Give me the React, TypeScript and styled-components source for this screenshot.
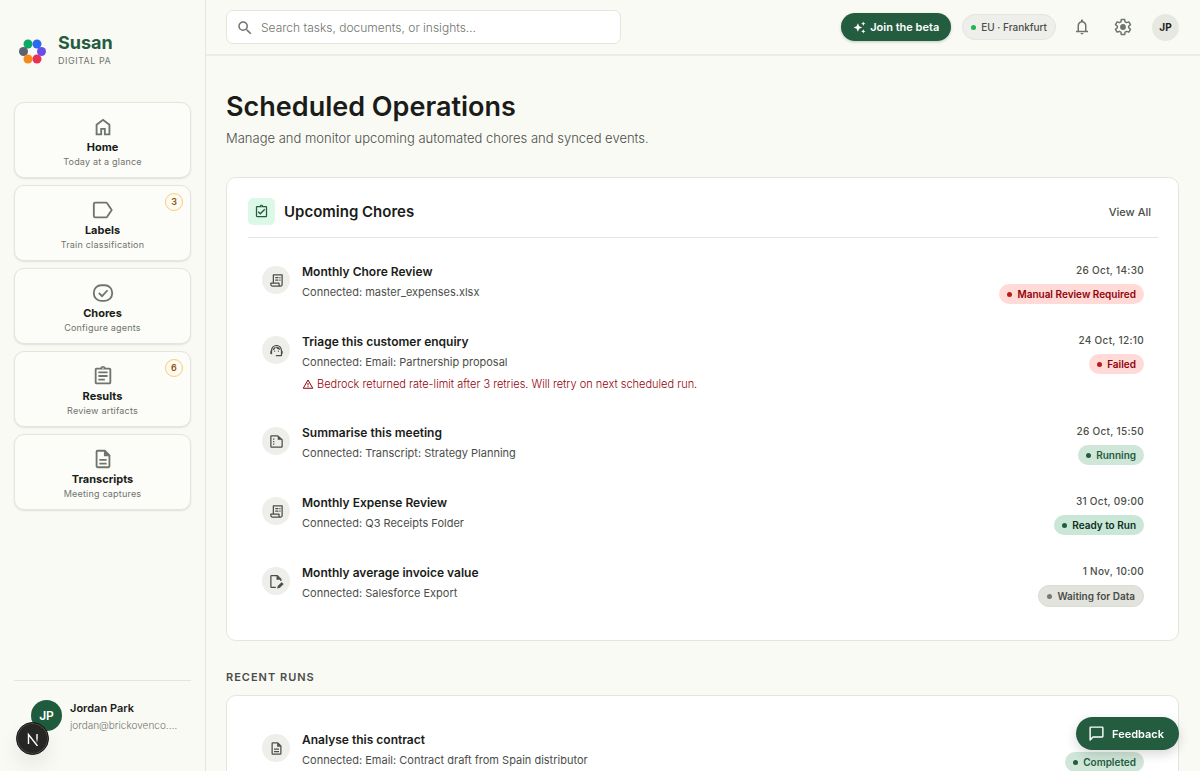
import React from "react";
import styled, { createGlobalStyle, css } from "styled-components";
import {
  MdOutlineAssignment,
  MdOutlineAssignmentTurnedIn,
  MdOutlineSupportAgent,
  MdSearch,
} from "react-icons/md";

const color = {
  page: "#fafaf5",
  card: "#ffffff",
  line: "#e4e5df",
  ink: "#1a1c19",
  body: "#4a4e49",
  muted: "#6f746e",
  green: "#245c3f",
  red: "#93000a",
};

const GlobalStyle = createGlobalStyle`
  *, *::before, *::after { box-sizing: border-box; }
  body {
    margin: 0;
    background: ${color.page};
    color: ${color.ink};
    font-family: Inter, "Liberation Sans", sans-serif;
    font-size: 12px;
    line-height: 20px;
    -webkit-font-smoothing: antialiased;
  }
  h1, h2, h3, p, ul { margin: 0; padding: 0; }
  ul { list-style: none; }
  a { color: inherit; text-decoration: none; }
  button, input { font: inherit; color: inherit; }
  button { border: 0; padding: 0; background: none; cursor: pointer; }
  svg { display: block; flex: none; }
`;

const Shell = styled.div`
  display: flex;
  height: 100vh;
  overflow: hidden;
`;

/* Sidebar */

const Sidebar = styled.aside`
  display: flex;
  flex-direction: column;
  flex: none;
  width: 206px;
  padding: 33px 14px 20px;
  border-right: 1px solid ${color.line};
`;

const Brand = styled.div`
  display: flex;
  align-items: center;
  gap: 12px;
  padding-left: 5px;
  margin-bottom: 33px;
`;

const BrandName = styled.div`
  font-size: 18px;
  font-weight: 700;
  line-height: 20px;
  color: ${color.green};
`;

const BrandTag = styled.div`
  font-size: 9px;
  line-height: 16px;
  letter-spacing: 0.5px;
  color: ${color.muted};
`;

const Nav = styled.nav`
  display: flex;
  flex-direction: column;
  gap: 7px;
`;

const NavCard = styled.a`
  position: relative;
  display: flex;
  flex-direction: column;
  align-items: center;
  height: 76px;
  padding-top: 13px;
  border: 1px solid ${color.line};
  border-radius: 10px;
  background: #fcfcf8;
  box-shadow: 0 1px 2px rgba(0, 0, 0, 0.1);

  svg { color: ${color.muted}; }
`;

const NavTitle = styled.span`
  font-size: 11px;
  font-weight: 700;
  line-height: 16px;
  margin-top: 1px;
`;

const NavHint = styled.span`
  font-size: 9px;
  line-height: 14px;
  letter-spacing: 0.2px;
  color: ${color.muted};
`;

const NavBadge = styled.span`
  position: absolute;
  top: 7px;
  right: 7px;
  width: 18px;
  height: 18px;
  border: 1px solid #f8cd7c;
  border-radius: 50%;
  background: #fffaf0;
  color: #8a5510;
  font-size: 9px;
  font-weight: 600;
  line-height: 16px;
  text-align: center;
`;

const Account = styled.div`
  display: flex;
  align-items: flex-start;
  gap: 8px;
  height: 71px;
  margin-top: auto;
  padding: 19px 10px 0 17px;
  border-top: 1px solid ${color.line};
`;

const AccountAvatar = styled.span`
  flex: none;
  width: 31px;
  height: 31px;
  border-radius: 50%;
  background: #1f5c3d;
  color: #fff;
  font-weight: 600;
  line-height: 31px;
  text-align: center;
`;

const AccountText = styled.div`
  min-width: 0;
`;

const AccountName = styled.div`
  font-size: 11px;
  font-weight: 600;
  line-height: 17px;
`;

const AccountMail = styled.div`
  overflow: hidden;
  color: ${color.muted};
  font-size: 10px;
  font-weight: 300;
  line-height: 17px;
  text-overflow: ellipsis;
  white-space: nowrap;
`;

const DevBadge = styled.button`
  position: fixed;
  left: 16px;
  bottom: 16px;
  display: grid;
  place-items: center;
  width: 33px;
  height: 33px;
  border: 1px solid #161616;
  border-radius: 50%;
  background: #262625;
  box-shadow: inset 0 0 0 1px #4b4b49, 0 10px 20px rgba(0, 0, 0, 0.08);
`;

/* Top bar */

const Column = styled.div`
  display: flex;
  flex: 1;
  flex-direction: column;
  min-width: 0;
`;

const TopBar = styled.header`
  display: flex;
  align-items: center;
  justify-content: space-between;
  gap: 24px;
  flex: none;
  height: 56px;
  padding: 0 21px 0 20px;
  border-bottom: 2px solid #ecede8;
`;

const SearchBox = styled.label`
  display: flex;
  align-items: center;
  gap: 7px;
  flex: 0 1 395px;
  height: 34px;
  padding: 1px 9px 0;
  border: 1px solid ${color.line};
  border-radius: 7px;
  background: ${color.card};

  svg { color: ${color.muted}; }
`;

const SearchInput = styled.input`
  flex: 1;
  min-width: 0;
  padding: 0;
  border: 0;
  outline: 0;
  background: none;
  font-size: 12px;
  font-weight: 300;

  &::placeholder { color: ${color.muted}; opacity: 1; }
`;

const TopActions = styled.div`
  display: flex;
  align-items: center;
  gap: 12px;
`;

const PillGroup = styled.div`
  display: flex;
  align-items: center;
  gap: 11px;
`;

const IconGroup = styled.div`
  display: flex;
  align-items: center;
  gap: 14px;
  padding-right: 4px;
`;

const solidButton = css`
  display: flex;
  align-items: center;
  background: ${color.green};
  color: #fff;
  font-weight: 600;
  border-radius: 20px;
  white-space: nowrap;
`;

const BetaButton = styled.button`
  ${solidButton}
  gap: 4px;
  height: 28px;
  padding: 0 12px;
  font-size: 11px;
  box-shadow: 0 1px 3px rgba(36, 92, 63, 0.3);
`;

const Region = styled.span`
  display: flex;
  align-items: center;
  gap: 5px;
  height: 26px;
  padding: 0 8px;
  border: 1px solid ${color.line};
  border-radius: 13px;
  background: #eeeeea;
  color: ${color.body};
  font-size: 10px;
  font-weight: 500;
  white-space: nowrap;
`;

const Dot = styled.i<{ $color: string }>`
  flex: none;
  width: 5px;
  height: 5px;
  border-radius: 50%;
  background: ${(p) => p.$color};
`;

const IconButton = styled.button`
  display: grid;
  place-items: center;
  width: 27px;
  height: 27px;
  color: ${color.muted};
`;

const UserButton = styled.button`
  width: 27px;
  height: 27px;
  border-radius: 50%;
  background: #e8e8e3;
  font-size: 10px;
  font-weight: 700;
  line-height: 27px;
  text-align: center;
`;

/* Page content */

const Main = styled.main`
  flex: 1;
  min-height: 0;
  overflow-y: auto;
  scrollbar-width: none;
  padding: 33px 21px 32px 20px;
`;

const PageTitle = styled.h1`
  font-size: 27px;
  font-weight: 600;
  line-height: 36px;
`;

const PageLead = styled.p`
  margin-top: 3px;
  color: ${color.body};
  font-size: 13px;
  font-weight: 300;
  line-height: 20px;
`;

const Panel = styled.section<{ $top: number }>`
  margin-top: ${(p) => p.$top}px;
  padding: 20px 20px 19px 21px;
  border: 1px solid ${color.line};
  border-radius: 10px;
  background: ${color.card};
`;

const PanelHead = styled.div`
  display: flex;
  align-items: center;
  gap: 9px;
  padding-bottom: 12px;
  margin-bottom: 10px;
  border-bottom: 1px solid ${color.line};
`;

const PanelIcon = styled.span`
  display: grid;
  place-items: center;
  width: 27px;
  height: 27px;
  border-radius: 5px;
  background: #dcf8e6;
  color: ${color.green};
`;

const PanelTitle = styled.h2`
  flex: 1;
  font-size: 15px;
  font-weight: 600;
  line-height: 24px;
`;

const ViewAll = styled.a`
  padding-right: 7px;
  color: ${color.body};
  font-size: 11px;
  font-weight: 500;
`;

const SectionTitle = styled.h2`
  margin-top: 27px;
  color: ${color.body};
  font-size: 11px;
  font-weight: 600;
  line-height: 18px;
  letter-spacing: 1px;
  text-transform: uppercase;
`;

const Item = styled.li`
  display: flex;
  align-items: flex-start;
  gap: 12px;
  padding: 14px;
`;

const ItemIcon = styled.span`
  display: grid;
  place-items: center;
  flex: none;
  width: 28px;
  height: 28px;
  margin-top: 4px;
  border-radius: 50%;
  background: #eeeeea;
  color: ${color.body};
`;

const ItemText = styled.div`
  flex: 1;
  min-width: 0;
`;

const ItemTitle = styled.h3`
  font-size: 12px;
  font-weight: 600;
  line-height: 20px;
`;

const ItemSource = styled.p`
  color: ${color.body};
  font-size: 11px;
  font-weight: 400;
  line-height: 21px;
`;

const ItemError = styled.p`
  display: flex;
  align-items: center;
  gap: 3px;
  color: ${color.red};
  font-size: 11px;
  font-weight: 300;
  line-height: 22px;
`;

const ItemMeta = styled.div`
  display: flex;
  flex-direction: column;
  align-items: flex-end;
  gap: 5px;
`;

const ItemTime = styled.time`
  min-height: 17px;
  color: ${color.body};
  font-size: 10px;
  font-weight: 500;
  line-height: 17px;
  letter-spacing: 0.3px;
`;

type Tone = "alert" | "active" | "ready" | "idle";

const tones: Record<Tone, { bg: string; text: string; dot: string }> = {
  alert: { bg: "#ffdad6", text: "#93000a", dot: "#ba1a1a" },
  active: { bg: "#cfe6d8", text: "#1f5c3d", dot: "#245c3f" },
  ready: { bg: "#c9e6d6", text: "#0c2f1e", dot: "#245c3f" },
  idle: { bg: "#e3e3de", text: "#4a4e49", dot: "#757873" },
};

const Status = styled.span<{ $tone: Tone }>`
  display: flex;
  align-items: center;
  gap: 5px;
  padding: 0 8px;
  border: ${(p) => (p.$tone === "idle" ? "1px solid #dadbd4" : "0")};
  border-radius: 11px;
  background: ${(p) => tones[p.$tone].bg};
  color: ${(p) => tones[p.$tone].text};
  font-size: 10px;
  font-weight: 600;
  line-height: 20px;
  white-space: nowrap;
`;

const FeedbackButton = styled.button`
  ${solidButton}
  position: fixed;
  right: 21px;
  bottom: 21px;
  gap: 7px;
  height: 33px;
  padding: 0 15px 0 12px;
  font-size: 11px;
  box-shadow: 0 4px 12px rgba(0, 0, 0, 0.16);
`;

/* Icons */

type IconProps = { size?: number };

const HomeIcon = ({ size = 22 }: IconProps) => (
  <svg width={size} height={size} viewBox="0 -960 960 960" fill="currentColor" aria-hidden="true">
    <path d="M240-200h120v-240h240v240h120v-360L480-740 240-560v360Zm-80 80v-480l320-240 320 240v480H520v-240h-80v240H160Z" />
  </svg>
);

const LabelIcon = ({ size = 22 }: IconProps) => (
  <svg width={size} height={size} viewBox="0 0 24 24" fill="none" stroke="currentColor" strokeWidth="2" strokeLinejoin="round" aria-hidden="true">
    <path d="M3.500 4h11.800c.6 0 1.100.3 1.400.8L21.500 12l-4.800 7.200c-.3.5-.8.8-1.400.8H3.500A1.500 1.500 0 0 1 2 18.500v-13A1.500 1.500 0 0 1 3.500 4Z" />
  </svg>
);

const ChoreIcon = ({ size = 22 }: IconProps) => (
  <svg width={size} height={size} viewBox="0 0 24 24" fill="none" stroke="currentColor" strokeWidth="2" aria-hidden="true">
    <rect x="2" y="3.500" width="20" height="17" rx="8" />
    <path d="m7.500 12 3.500 3.500 6-6.500" />
  </svg>
);

const DocIcon = ({ size = 22 }: IconProps) => (
  <svg width={size} height={size} viewBox="0 0 24 24" fill="none" stroke="currentColor" strokeWidth="2" aria-hidden="true">
    <path d="M14 3H6a1 1 0 0 0-1 1v16a1 1 0 0 0 1 1h12a1 1 0 0 0 1-1V8l-5-5Z" strokeLinejoin="round" />
    <path d="M13 3.500V9h6L14 3Z" fill="currentColor" stroke="none" />
    <path d="M8 13h8M8 17h8" />
  </svg>
);

const ReceiptIcon = ({ size = 15 }: IconProps) => (
  <svg width={size} height={size} viewBox="0 0 24 24" fill="none" stroke="currentColor" strokeWidth="2" aria-hidden="true">
    <path d="M7 16V3h14v15.500a2.500 2.500 0 0 1-5 0V16H3v2.500A2.500 2.500 0 0 0 5.500 21h13" strokeLinejoin="round" />
    <path d="M10 7.500h5M10 11.500h5M16.500 7.500h2M16.500 11.500h2" />
  </svg>
);

const NoteIcon = ({ size = 15 }: IconProps) => (
  <svg width={size} height={size} viewBox="0 0 24 24" fill="none" stroke="currentColor" strokeWidth="2" aria-hidden="true">
    <path d="M14 3H4a1 1 0 0 0-1 1v16a1 1 0 0 0 1 1h16a1 1 0 0 0 1-1V9l-7-6Z" strokeLinejoin="round" />
    <path d="M14 3v6h7Z" fill="currentColor" stroke="none" />
    <path d="M6.500 8h2M6.500 12h2M6.500 16h2" />
  </svg>
);

const DocEditIcon = ({ size = 15 }: IconProps) => (
  <svg width={size} height={size} viewBox="0 0 24 24" fill="none" stroke="currentColor" strokeWidth="2" aria-hidden="true">
    <path d="M11 21.500H4a1 1 0 0 1-1-1v-17a1 1 0 0 1 1-1h9l6 6V11" strokeLinejoin="round" />
    <path d="M12 2.500V9h7Z" fill="currentColor" stroke="none" />
    <path d="m13 23 1-4 6-6 3.500 3L17.500 22Z" fill="currentColor" stroke="none" />
  </svg>
);

const WarnIcon = ({ size = 12 }: IconProps) => (
  <svg width={size} height={size} viewBox="0 0 24 24" fill="none" stroke="currentColor" strokeWidth="2" aria-hidden="true">
    <path d="M12 4 2.500 20.500h19Z" />
    <path d="M12 10v5M12 16.500v2" />
  </svg>
);

const BellIcon = ({ size = 18 }: IconProps) => (
  <svg width={size} height={size} viewBox="0 -960 960 960" fill="currentColor" aria-hidden="true">
    <path d="M160-200v-80h80v-280q0-83 50-147.500T420-792v-28q0-25 17.500-42.500T480-880q25 0 42.500 17.500T540-820v28q80 20 130 84.500T720-560v280h80v80H160Zm320 120q-33 0-56.500-23.500T400-160h160q0 33-23.500 56.500T480-80ZM320-280h320v-280q0-66-47-113t-113-47q-66 0-113 47t-47 113v280Z" />
  </svg>
);

const GearIcon = ({ size = 20 }: IconProps) => (
  <svg width={size} height={size} viewBox="0 0 24 24" fill="none" stroke="currentColor" strokeWidth="1.800" strokeLinejoin="round" aria-hidden="true">
    <path d="M10 3h4l.5 2.800 1.800 1 2.700-1 2 3.400-2.200 1.900v1.800l2.200 1.900-2 3.400-2.700-1-1.800 1L14 21h-4l-.5-2.800-1.800-1-2.700 1-2-3.400 2.200-1.900v-1.800L3 9.200l2-3.400 2.700 1 1.800-1Z" />
    <circle cx="12" cy="12" r="2.600" fill="currentColor" />
  </svg>
);

const SparkIcon = ({ size = 13 }: IconProps) => (
  <svg width={size} height={size} viewBox="0 0 24 24" fill="currentColor" aria-hidden="true">
    <path d="m9 4 2.400 5.600L17 12l-5.600 2.400L9 20l-2.400-5.600L1 12l5.600-2.400Z" />
    <path d="m19 1 1.200 2.800L23 5l-2.800 1.200L19 9l-1.200-2.800L15 5l2.800-1.200ZM19 15l1.200 2.800L23 19l-2.800 1.200L19 23l-1.200-2.800L15 19l2.800-1.200Z" />
  </svg>
);

const ChatIcon = ({ size = 17 }: IconProps) => (
  <svg width={size} height={size} viewBox="0 0 24 24" fill="none" stroke="currentColor" strokeWidth="2" strokeLinejoin="round" aria-hidden="true">
    <path d="M3 21V4a1 1 0 0 1 1-1h16a1 1 0 0 1 1 1v12a1 1 0 0 1-1 1H7Z" />
  </svg>
);

const BrandLogo = () => (
  <svg width="27" height="27" viewBox="0 0 27 27" aria-hidden="true">
    <circle cx="9" cy="6" r="4.500" fill="#0ca866" />
    <circle cx="18" cy="6" r="4.500" fill="#2a6af2" />
    <circle cx="4.500" cy="13.500" r="4.500" fill="#5b6270" />
    <circle cx="22.500" cy="13.500" r="4.500" fill="#6a4ee8" />
    <circle cx="9" cy="21" r="4.500" fill="#f58a1a" />
    <circle cx="18" cy="21" r="4.500" fill="#ec2f55" />
  </svg>
);

const DevMark = () => (
  <svg width="14" height="14" viewBox="0 0 14 14" fill="none" stroke="#fff" strokeWidth="1.400" aria-hidden="true">
    <defs>
      <linearGradient id="fade" x1="0" y1="0" x2="0" y2="1">
        <stop offset="0.5" stopColor="#fff" />
        <stop offset="1" stopColor="#fff" stopOpacity="0" />
      </linearGradient>
    </defs>
    <path d="M2.500 12V2.500L11.500 14" />
    <rect x="10.300" y="2" width="1.400" height="9" fill="url(#fade)" stroke="none" />
  </svg>
);

/* Data */

const navItems = [
  { title: "Home", hint: "Today at a glance", icon: <HomeIcon /> },
  { title: "Labels", hint: "Train classification", icon: <LabelIcon />, badge: 3 },
  { title: "Chores", hint: "Configure agents", icon: <ChoreIcon /> },
  { title: "Results", hint: "Review artifacts", icon: <MdOutlineAssignment size={22} />, badge: 6 },
  { title: "Transcripts", hint: "Meeting captures", icon: <DocIcon /> },
];

type Chore = {
  title: string;
  source: string;
  time?: string;
  status: string;
  tone: Tone;
  icon: React.ReactNode;
  error?: string;
};

const upcoming: Chore[] = [
  {
    title: "Monthly Chore Review",
    source: "master_expenses.xlsx",
    time: "26 Oct, 14:30",
    status: "Manual Review Required",
    tone: "alert",
    icon: <ReceiptIcon />,
  },
  {
    title: "Triage this customer enquiry",
    source: "Email: Partnership proposal",
    time: "24 Oct, 12:10",
    status: "Failed",
    tone: "alert",
    icon: <MdOutlineSupportAgent size={15} />,
    error: "Bedrock returned rate-limit after 3 retries. Will retry on next scheduled run.",
  },
  {
    title: "Summarise this meeting",
    source: "Transcript: Strategy Planning",
    time: "26 Oct, 15:50",
    status: "Running",
    tone: "active",
    icon: <NoteIcon />,
  },
  {
    title: "Monthly Expense Review",
    source: "Q3 Receipts Folder",
    time: "31 Oct, 09:00",
    status: "Ready to Run",
    tone: "ready",
    icon: <ReceiptIcon />,
  },
  {
    title: "Monthly average invoice value",
    source: "Salesforce Export",
    time: "1 Nov, 10:00",
    status: "Waiting for Data",
    tone: "idle",
    icon: <DocEditIcon />,
  },
];

const recent: Chore[] = [
  {
    title: "Analyse this contract",
    source: "Email: Contract draft from Spain distributor",
    status: "Completed",
    tone: "active",
    icon: <DocIcon size={15} />,
  },
];

const ChoreItem = ({ chore }: { chore: Chore }) => (
  <Item>
    <ItemIcon>{chore.icon}</ItemIcon>
    <ItemText>
      <ItemTitle>{chore.title}</ItemTitle>
      <ItemSource>Connected: {chore.source}</ItemSource>
      {chore.error && (
        <ItemError>
          <WarnIcon />
          {chore.error}
        </ItemError>
      )}
    </ItemText>
    <ItemMeta>
      <ItemTime>{chore.time}</ItemTime>
      <Status $tone={chore.tone}>
        <Dot $color={tones[chore.tone].dot} />
        {chore.status}
      </Status>
    </ItemMeta>
  </Item>
);

export default function App() {
  return (
    <>
      <GlobalStyle />
      <Shell>
        <Sidebar>
          <Brand>
            <BrandLogo />
            <div>
              <BrandName>Susan</BrandName>
              <BrandTag>DIGITAL PA</BrandTag>
            </div>
          </Brand>
          <Nav>
            {navItems.map((item) => (
              <NavCard href="#" key={item.title}>
                {item.icon}
                <NavTitle>{item.title}</NavTitle>
                <NavHint>{item.hint}</NavHint>
                {item.badge && <NavBadge>{item.badge}</NavBadge>}
              </NavCard>
            ))}
          </Nav>
          <Account>
            <AccountAvatar>JP</AccountAvatar>
            <AccountText>
              <AccountName>Jordan Park</AccountName>
              <AccountMail>jordan@brickovenco.com</AccountMail>
            </AccountText>
          </Account>
        </Sidebar>
        <Column>
          <TopBar>
            <SearchBox>
              <MdSearch size={18} />
              <SearchInput type="search" aria-label="Search" placeholder="Search tasks, documents, or insights…" />
            </SearchBox>
            <TopActions>
              <PillGroup>
                <BetaButton type="button">
                  <SparkIcon />
                  Join the beta
                </BetaButton>
                <Region>
                  <Dot $color="#1fb455" />
                  EU · Frankfurt
                </Region>
              </PillGroup>
              <IconGroup>
                <IconButton type="button" aria-label="Notifications">
                  <BellIcon />
                </IconButton>
                <IconButton type="button" aria-label="Settings">
                  <GearIcon />
                </IconButton>
              </IconGroup>
              <UserButton type="button">JP</UserButton>
            </TopActions>
          </TopBar>
          <Main>
            <PageTitle>Scheduled Operations</PageTitle>
            <PageLead>Manage and monitor upcoming automated chores and synced events.</PageLead>
            <Panel $top={29}>
              <PanelHead>
                <PanelIcon>
                  <MdOutlineAssignmentTurnedIn size={15} />
                </PanelIcon>
                <PanelTitle>Upcoming Chores</PanelTitle>
                <ViewAll href="#">View All</ViewAll>
              </PanelHead>
              <ul>
                {upcoming.map((chore) => (
                  <ChoreItem chore={chore} key={chore.title} />
                ))}
              </ul>
            </Panel>
            <SectionTitle>Recent Runs</SectionTitle>
            <Panel $top={9}>
              <ul>
                {recent.map((chore) => (
                  <ChoreItem chore={chore} key={chore.title} />
                ))}
              </ul>
            </Panel>
          </Main>
        </Column>
      </Shell>
      <DevBadge type="button" aria-label="Developer tools">
        <DevMark />
      </DevBadge>
      <FeedbackButton type="button">
        <ChatIcon />
        Feedback
      </FeedbackButton>
    </>
  );
}
